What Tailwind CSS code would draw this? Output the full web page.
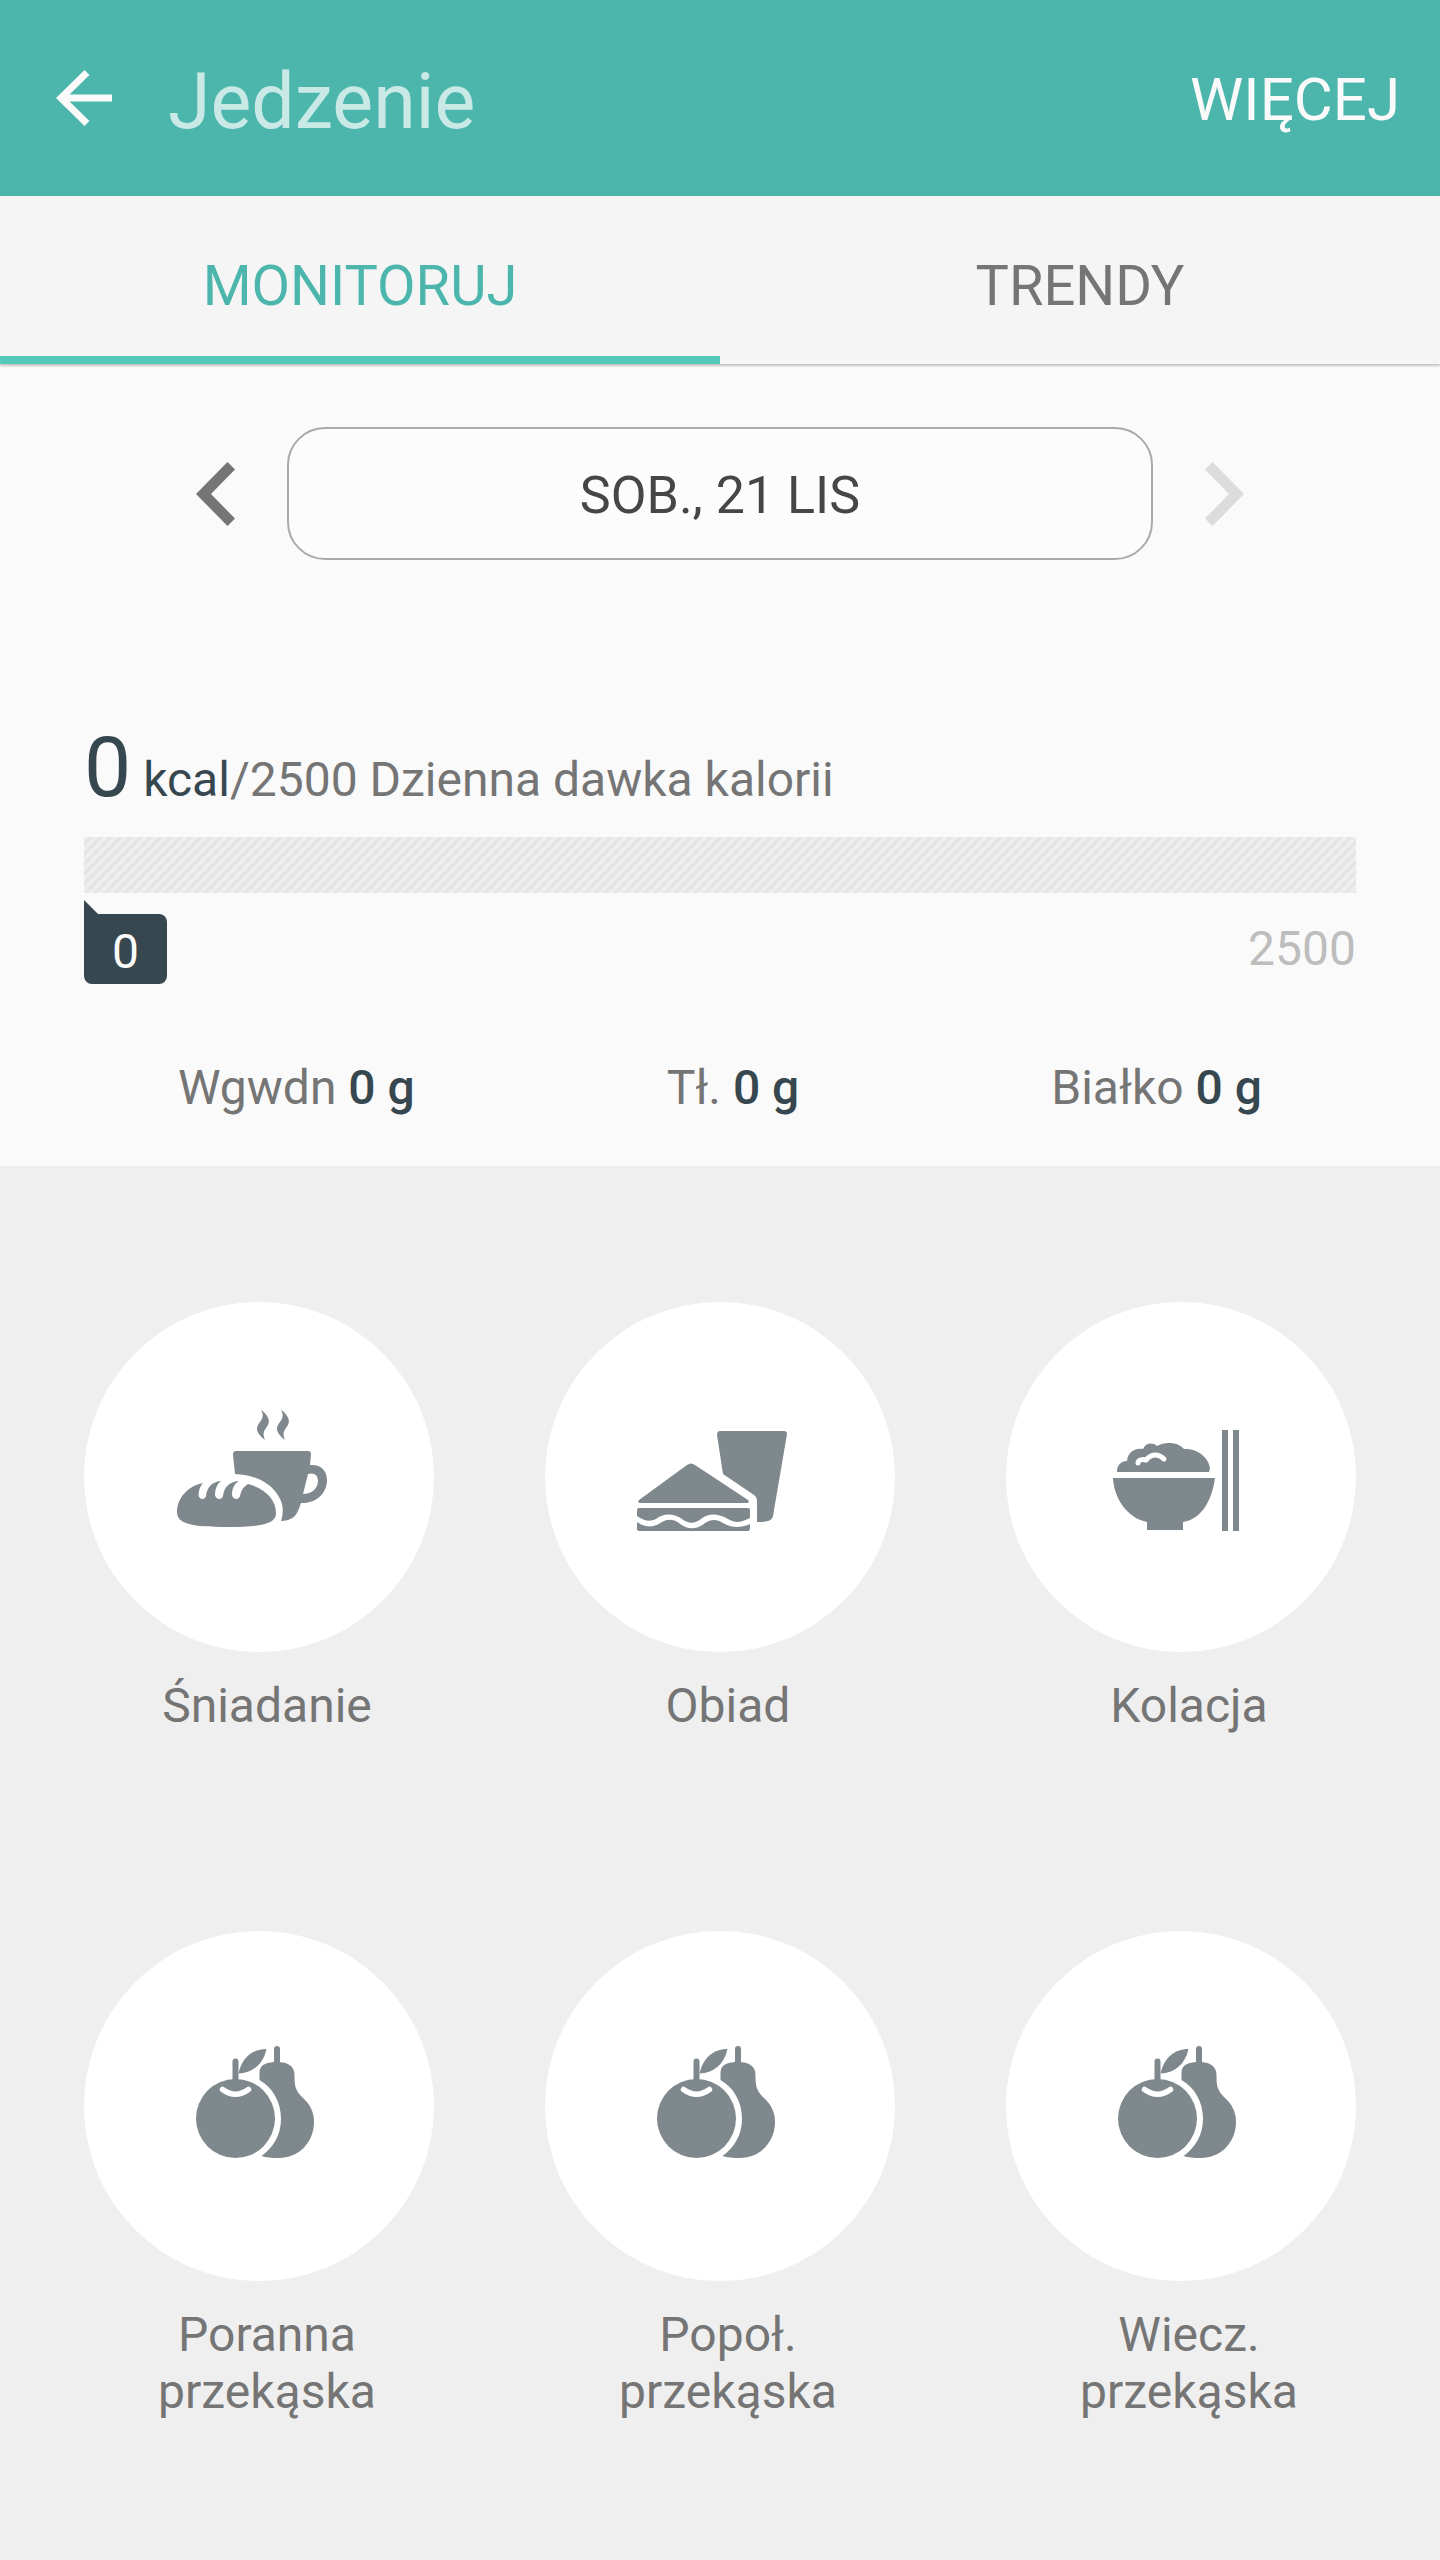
<!DOCTYPE html>
<html lang="pl">
<head>
<meta charset="utf-8">
<meta name="viewport" content="width=device-width, initial-scale=1">
<title>Jedzenie</title>
<script src="https://cdn.jsdelivr.net/npm/@tailwindcss/browser@4"></script>
</head>
<body class="min-h-screen bg-[#efefef] font-[Roboto,sans-serif] text-[#757575]">
<svg class="hidden" aria-hidden="true">
  <symbol id="fruit" viewBox="4 1 150 150">
    <circle cx="55.500" cy="88.500" r="39.500"/>
    <path d="M55.500 31.500V52M97 19V34" stroke="currentColor" stroke-width="6" stroke-linecap="round"/>
    <path d="M58.500 43.500C62 28 72 19 86.500 19C83 35 72 43 58.500 43.500Z"/>
    <path d="M79.500 50V42C80 34 88 32 97 32C108 32 114.500 36 114.500 45C114.500 55 115 60 122 67C130 74 134 82 134 92C134 113 118 128 99 128C92 128 86 127.500 81.500 126C93 118 101 105 101 89C101 72 93 58 79.500 50Z"/>
    <path d="M42.500 59.500Q55.500 69 68.500 59.500" fill="none" stroke="white" stroke-width="5.500" stroke-linecap="round"/>
  </symbol>
</svg>

<header class="flex h-[196px] items-center bg-[#4db6ac] pl-14 pr-10 text-[#fafafa]">
  <button type="button" aria-label="Wstecz" class="mr-14">
    <svg class="h-14 w-14" viewBox="0 0 56 56" fill="none" stroke="currentColor" stroke-width="7"><path d="M31 2.500L5 28L31 53.500M5 28H56"/></svg>
  </button>
  <h1 class="flex-1 pt-2 text-[77px] leading-[90px] text-[#c9e9e6]">Jedzenie</h1>
  <button type="button" class="pt-1 text-[60px] leading-[72px]">WIĘCEJ</button>
</header>

<nav class="relative grid h-[168px] grid-cols-2 bg-[#f5f5f5] text-[56px] shadow-[0_2px_2px_#c4c4c4]">
  <a href="#monitoruj" aria-current="page" class="flex items-center justify-center border-b-8 border-[#53c8bb] pt-5 text-[#4db6ac]">MONITORUJ</a>
  <a href="#trendy" class="flex items-center justify-center border-b-8 border-transparent pt-5">TRENDY</a>
</nav>

<main>
  <section class="bg-[#fafafa] pb-12 pt-[63px] text-[48px] leading-[60px]">
    <div class="flex items-center gap-[52px] px-[196px]">
      <button type="button" aria-label="Poprzedni dzień" class="text-[#757575]">
        <svg class="h-16 w-[39px]" viewBox="0 0 39 64" fill="currentColor"><path d="M31.500 0L39 7.500L15 32L39 56.500L31.500 64L0 32Z"/></svg>
      </button>
      <button type="button" class="h-[133px] flex-1 rounded-[38px] border-2 border-[#aaa] bg-[#fcfcfc] pt-1 text-[52px] text-[#464646]">SOB., 21 LIS</button>
      <button type="button" aria-label="Następny dzień" class="text-[#dcdcdc]">
        <svg class="h-16 w-[39px]" viewBox="0 0 39 64" fill="currentColor"><path d="M7.500 0L0 7.500L24 32L0 56.500L7.500 64L39 32Z"/></svg>
      </button>
    </div>

    <div class="px-[84px] pt-[158px]">
      <p><span class="text-[#37474f]"><span class="text-[84px] leading-[100px]">0</span> kcal</span>/2500 Dzienna dawka kalorii</p>
      <div class="mt-[19px] h-14 bg-[linear-gradient(135deg,#eeeeee_25%,#e5e5e5_25%,#e5e5e5_50%,#eeeeee_50%,#eeeeee_75%,#e5e5e5_75%)] bg-[length:10px_10px]" role="progressbar" aria-label="Kalorie" aria-valuemin="0" aria-valuemax="2500" aria-valuenow="0"></div>
      <div class="flex items-start justify-between">
        <div class="pt-[7px] text-[#fafafa]">
          <svg class="block h-[14px] w-[14px] text-[#37474f]" viewBox="0 0 14 14" fill="currentColor"><path d="M0 0L14 14H0Z"/></svg>
          <div class="h-[70px] w-[83px] rounded-lg rounded-tl-none bg-[#37474f] pt-2 text-center">0</div>
        </div>
        <span class="pt-[26px] text-[#bdbdbd]">2500</span>
      </div>
    </div>

    <div class="flex justify-around px-[52px] pt-[74px]">
      <p>Wgwdn <b class="font-medium text-[#37474f]">0 g</b></p>
      <p>Tł. <b class="font-medium text-[#37474f]">0 g</b></p>
      <p>Białko <b class="font-medium text-[#37474f]">0 g</b></p>
    </div>
  </section>

  <section class="grid grid-cols-[350px_350px_350px] justify-between gap-y-[197px] px-[84px] pt-[136px] pb-20 text-center text-[48px] leading-[57px]">
    <button type="button" class="flex flex-col items-center justify-start gap-[25px]">
      <span class="flex h-[350px] w-[350px] items-center justify-center rounded-full bg-white text-[#7f888d]">
        <svg class="h-[160px] w-[190px]" viewBox="4 7 190 160" fill="currentColor">
          <path d="M101 19.500C111 28 110 33 106 38C103 42 103 45 105 50C96 43 95 38 100 32C104 27 103 24 101 19.500ZM121 19.500C131 28 130 33 126 38C123 42 123 45 125 50C116 43 115 38 120 32C124 27 123 24 121 19.500Z"/>
          <path fill-rule="evenodd" d="M76 61H148Q151 61 151 64L150 75C160 74 167 80 167 90C167 104 155 114 141 113C137 124 136 130 121 131C124 122 123 113 119 107C111 93 96 85 75 84L73 65Q73 61 76 61ZM148 84L143 104C152 104 158 98 158 91C158 85 154 82 148 84Z"/>
          <path d="M17 122C17 108 28 96 43 93C39 98 39 101 38.500 105C39 110 45 110 46 106C47 98 51 92 61 91C57 94 55 99 55 105C56 110 62 110 63 106C64 98 68 92 79 91C74 94 72 99 72 105C73 110 79 110 80 106C81 101 83 97 88 94C106 99 116 110 116 123C116 134 102 137 67 137C32 137 17 134 17 122Z"/>
        </svg>
      </span>
      <span class="pl-4">Śniadanie</span>
    </button>
    <button type="button" class="flex flex-col items-center justify-start gap-[25px]">
      <span class="flex h-[350px] w-[350px] items-center justify-center rounded-full bg-white text-[#7f888d]">
        <svg class="h-[140px] w-[190px]" viewBox="5 -3 190 140" fill="currentColor">
          <path d="M100 21H164Q167 21 167 24L153 106C152 111 147 112 137 112V90Q137 87 134 85L103 64L97 25Q97 21 100 21Z"/>
          <path d="M19 90L67 55Q71 52 75 55L128 90Q130 93 127 93H20Q17 93 19 90Z"/>
          <path d="M19 98H128Q130 98 130 100V108C122 112 116 114 108 109C98 103 88 103 81 109C74 114 69 114 62 109C54 103 43 103 36 109C30 112 24 111 17 106V100Q17 98 19 98Z"/>
          <path d="M17 112C25 118 34 118 42 112C48 109 53 109 59 113C67 120 77 120 85 113C91 109 97 109 103 113C111 118 121 118 130 114V118Q130 121 128 121H19Q17 121 17 119Z"/>
        </svg>
      </span>
      <span class="pl-4">Obiad</span>
    </button>
    <button type="button" class="flex flex-col items-center justify-start gap-[25px]">
      <span class="flex h-[350px] w-[350px] items-center justify-center rounded-full bg-white text-[#7f888d]">
        <svg class="h-[140px] w-[190px]" viewBox="-4 -3 190 140" fill="currentColor">
          <path d="M27 62C27 55 31 51 37 51C38 42 45 38 53 39C56 33 62 32 67 36C75 31 89 32 94 39C108 38 120 49 120 59L119 62Z"/>
          <path d="M48 53C48 50 52 49 56 50C62 43 69 44 74 49" fill="none" stroke="white" stroke-width="5" stroke-linecap="round" stroke-linejoin="round"/>
          <path d="M23 68H125C122 90 112 109 93 112V120H57V112C37 108 24 88 23 68ZM132 20H138V121H132ZM143 20H149V121H143Z"/>
        </svg>
      </span>
      <span class="pl-4">Kolacja</span>
    </button>
    <button type="button" class="flex flex-col items-center justify-start gap-[25px]">
      <span class="flex h-[350px] w-[350px] items-center justify-center rounded-full bg-white text-[#7f888d]"><svg class="h-[150px] w-[150px]" fill="currentColor"><use href="#fruit"/></svg></span>
      <span class="pl-4">Poranna<br>przekąska</span>
    </button>
    <button type="button" class="flex flex-col items-center justify-start gap-[25px]">
      <span class="flex h-[350px] w-[350px] items-center justify-center rounded-full bg-white text-[#7f888d]"><svg class="h-[150px] w-[150px]" fill="currentColor"><use href="#fruit"/></svg></span>
      <span class="pl-4">Popoł.<br>przekąska</span>
    </button>
    <button type="button" class="flex flex-col items-center justify-start gap-[25px]">
      <span class="flex h-[350px] w-[350px] items-center justify-center rounded-full bg-white text-[#7f888d]"><svg class="h-[150px] w-[150px]" fill="currentColor"><use href="#fruit"/></svg></span>
      <span class="pl-4">Wiecz.<br>przekąska</span>
    </button>
  </section>
</main>
</body>
</html>
